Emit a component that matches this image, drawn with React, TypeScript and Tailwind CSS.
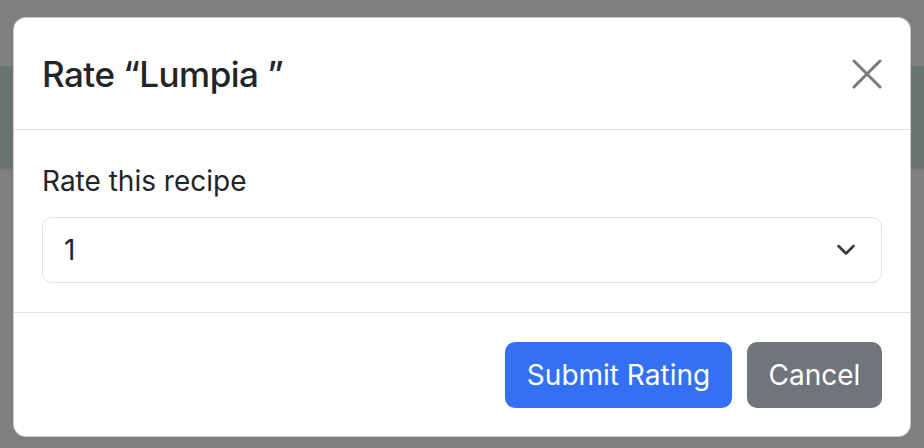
import { useState } from 'react';

export default function App() {
  const [rating, setRating] = useState('1');

  return (
    <div
      className="relative h-[448px] w-[924px] overflow-hidden bg-[#7f7f7f]"
      style={{ fontFamily: 'Inter, "Noto Sans", "Liberation Sans", sans-serif' }}
    >
      {/* page behind the backdrop */}
      <div className="mt-[66px] h-[102px] w-full bg-[#6a746e]" />
      <div className="h-[2px] w-full bg-[#737873]" />

      {/* modal */}
      <div className="absolute left-[13px] top-[17px] flex h-[420px] w-[898px] flex-col overflow-hidden rounded-[13px] border border-black/20 bg-white text-[#212529]">
        <div className="flex h-[112px] shrink-0 items-center justify-between border-b border-[#dee2e6] px-[28px]">
          <h5 className="text-[35px] font-medium leading-[52px] tracking-[-0.015em]">Rate “Lumpia ”</h5>
          <button className="flex h-[30px] w-[30px] items-center justify-center" aria-label="Close">
            <svg width="30" height="30" viewBox="0 0 30 30" fill="none">
              <path d="M2 2L28 28M28 2L2 28" stroke="#7a7a7a" strokeWidth="3" strokeLinecap="round" />
            </svg>
          </button>
        </div>

        <div className="border-b border-[#dee2e6] px-[28px] pb-[29px] pt-[30px]">
          <label className="mb-[15px] block text-[28px] leading-[42px]">Rate this recipe</label>
          <div className="relative">
            <select
              value={rating}
              onChange={(e) => setRating(e.target.value)}
              className="h-[66px] w-full appearance-none rounded-[10px] border border-[#dee2e6] bg-white pl-[21px] text-[28px] text-[#212529] outline-none"
            >
              {['1', '2', '3', '4', '5'].map((n) => (
                <option key={n} value={n}>
                  {n}
                </option>
              ))}
            </select>
            <svg
              className="pointer-events-none absolute right-[27px] top-[27px]"
              width="18"
              height="12"
              viewBox="0 0 18 12"
              fill="none"
            >
              <path d="M1.5 2L9 9.5L16.5 2" stroke="#343a40" strokeWidth="2.5" strokeLinecap="round" strokeLinejoin="round" />
            </svg>
          </div>
        </div>

        <div className="flex flex-1 items-center justify-end gap-[15px] px-[28px]">
          <button className="h-[66px] w-[227px] rounded-[10px] bg-[#3370f4] text-[28px] text-white">
            Submit Rating
          </button>
          <button className="h-[66px] w-[135px] rounded-[10px] bg-[#70757c] text-[28px] text-white">
            Cancel
          </button>
        </div>
      </div>
    </div>
  );
}
